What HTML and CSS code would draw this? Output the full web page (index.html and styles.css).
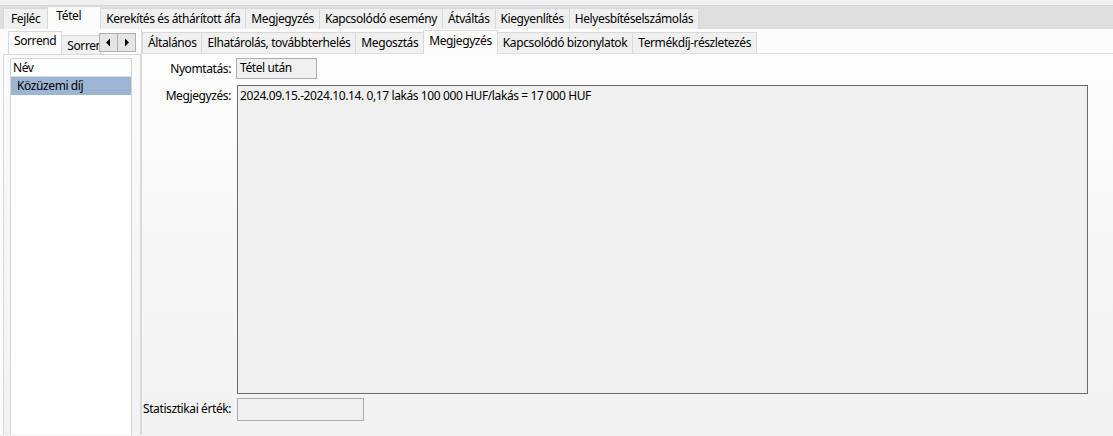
FILE: index.html
```html
<!DOCTYPE html>
<html lang="hu">
<head>
<meta charset="utf-8">
<link rel="stylesheet" href="styles.css">
</head>
<body>
<div class="topstrip"></div>
<div class="tabstrip top">
  <div class="tab first">Fejléc</div>
  <div class="tab sel wide">Tétel</div>
  <div class="tab">Kerekítés és áthárított áfa</div>
  <div class="tab">Megjegyzés</div>
  <div class="tab">Kapcsolódó esemény</div>
  <div class="tab">Átváltás</div>
  <div class="tab">Kiegyenlítés</div>
  <div class="tab">Helyesbítéselszámolás</div>
</div>
<div class="page">
  <div class="left">
    <div class="tabstrip inner">
      <div class="tab sel">Sorrend</div>
      <div class="tab cut">Sorrend</div>
      <div class="scroller">
        <div class="sbtn"><svg width="7" height="9" viewBox="0 0 7 9"><path d="M5 0.5L1 4.5L5 8.5Z" fill="#000"/></svg></div>
        <div class="sbtn"><svg width="7" height="9" viewBox="0 0 7 9"><path d="M2 0.5L6 4.5L2 8.5Z" fill="#000"/></svg></div>
      </div>
    </div>
    <div class="leftbody">
      <div class="list">
        <div class="lhead">Név</div>
        <div class="lrow sel">Közüzemi díj</div>
      </div>
    </div>
  </div>
  <div class="right">
    <div class="tabstrip inner rtabs">
      <div class="tab">Általános</div>
      <div class="tab">Elhatárolás, továbbterhelés</div>
      <div class="tab">Megosztás</div>
      <div class="tab sel">Megjegyzés</div>
      <div class="tab">Kapcsolódó bizonylatok</div>
      <div class="tab">Termékdíj-részletezés</div>
    </div>
    <div class="form">
      <div class="lbl mid">Nyomtatás:</div>
      <div class="field small">Tétel után</div>
      <div class="lbl top">Megjegyzés:</div>
      <div class="field area">2024.09.15.-2024.10.14. 0,17 lakás 100 000 HUF/lakás = 17 000 HUF</div>
      <div class="lbl mid statrow">Statisztikai érték:</div>
      <div class="field stat statrow"></div>
    </div>
  </div>
</div>
</body>
</html>
```
FILE: styles.css
```css
* { box-sizing: border-box; }
html, body { margin: 0; padding: 0; }
body {
  width: 1113px;
  height: 436px;
  overflow: hidden;
  background: #f0f0f0;
  font-family: "Noto Sans", "Open Sans", sans-serif;
  font-size: 12px;
  letter-spacing: -0.4px;
  color: #000;
}
.topstrip {
  height: 6px;
  background: #f0f0f0;
  border-bottom: 1px solid #d6d6d6;
}
.tabstrip {
  display: flex;
  align-items: flex-end;
}
.tabstrip.top {
  height: 23px;
  background: #dedede;
  padding-left: 3px;
}
.tab {
  height: 21px;
  line-height: 19px;
  padding: 0 5px;
  background: #f0f0f0;
  border: 1px solid #d9d9d9;
  border-bottom: none;
  margin-left: -1px;
  white-space: nowrap;
}
.tab.first { margin-left: 0; padding: 0 7px; }
.tab.sel {
  height: 23px;
  background: #fcfcfc;
  position: relative;
  z-index: 1;
  line-height: 17px;
}
.tab.wide { padding: 0 19px 0 8px; }
.page {
  display: flex;
  height: 406px;
  background: #fcfcfc;
}
.left {
  width: 141px;
  padding: 3px 0 0 3px;
  display: flex;
  flex-direction: column;
}
.tabstrip.inner {
  height: 22px;
}
.left .tab.sel { padding: 0 5px; margin-left: 5px; }
.tab.cut {
  width: 40px;
  overflow: hidden;
  padding: 0 0 0 5px;
  height: 19px;
  flex-shrink: 0;
}
.scroller {
  display: flex;
  align-self: flex-start;
  margin-top: 1px;
  margin-left: -1px;
  flex-shrink: 0;
}
.sbtn {
  width: 19px;
  height: 19px;
  background: #e5e5e5;
  border: 1px solid #b0b0b0;
  display: flex;
  align-items: center;
  justify-content: center;
  margin-left: -1px;
}
.leftbody {
  flex: 1;
  border: 1px solid #d9d9d9;
  border-bottom: none;
  background: linear-gradient(#fbfbfb, #f2f2f2);
  padding: 3px 8px 0 6px;
  display: flex;
}
.list {
  flex: 1;
  background: #fff;
  border: 1px solid #d4d4d4;
  border-bottom: none;
  padding-top: 1px;
}
.lhead {
  height: 17px;
  line-height: 16px;
  padding-left: 2px;
  border-bottom: 1px solid #dcdcdc;
  background: #fff;
}
.lrow {
  height: 18px;
  line-height: 17px;
  padding-left: 6px;
}
.lrow.sel { background: #9cb5d2; }
.right {
  flex: 1;
  padding-top: 3px;
  display: flex;
  flex-direction: column;
  border-left: 1px solid #dadada;
}
.rtabs {
  border-bottom: 1px solid #e0e0e0;
  height: 23px;
  padding-left: 1px;
}
.rtabs .tab { height: 21px; }
.rtabs .tab.sel { height: 24px; margin-bottom: -1px; line-height: 19px; }
.form {
  flex: 1;
  background: linear-gradient(#fdfdfd, #f2f2f2);
  display: grid;
  grid-template-columns: 88px 852px;
  grid-template-rows: 21px 309px 21px;
  column-gap: 5px;
  row-gap: 6px;
  padding: 4px 0 0 1px;
  align-content: start;
}
.form .lbl {
  text-align: right;
  white-space: nowrap;
}
.lbl.mid { line-height: 21px; }
.lbl.top { padding-top: 2px; }
.statrow { margin-top: -2px; }
.field {
  background: #f0f0f0;
  border: 1px solid #adadad;
  padding: 0 3px;
}
.field.small { width: 81px; line-height: 18px; }
.field.area {
  border-color: #6b6b6b;
  padding: 1px 2px;
  line-height: 17px;
  margin-left: 1px;
  width: 851px;
}
.field.stat { width: 127px; margin-left: 1px; }
```
